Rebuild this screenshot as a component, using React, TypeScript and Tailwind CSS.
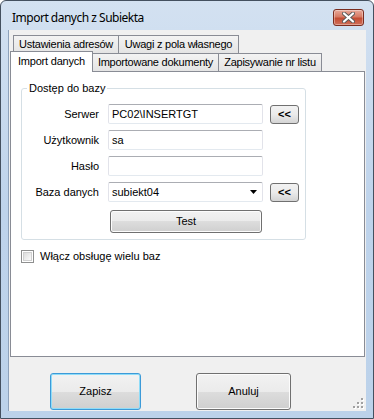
import React from "react";

const sans = "font-['Liberation_Sans',Arial,sans-serif]";

export default function App() {
  return (
    <div className="w-[374px] h-[419px] bg-white">
      {/* Window frame */}
      <div className="w-[374px] h-[419px] flex flex-col border border-[#44505f] rounded-t-[6px] bg-gradient-to-b from-[#d3e1f1] via-[#bed3eb] to-[#bcd2ea] overflow-hidden">
        {/* Title bar */}
        <div className="h-[29px] flex items-start">
          <span className="pl-[11px] pt-[9px] text-[12px] leading-[16px] tracking-[-0.5px] text-black font-['Noto_Sans',sans-serif]">
            Import danych z Subiekta
          </span>
          <div className="flex-1" />
          <CloseButton />
        </div>

        {/* Client area */}
        <div className={`relative mx-[7px] mb-[7px] flex-1 bg-[#f0f0f0] border-l border-[#8ea2bb] flex flex-col ${sans} text-[11px] text-black`}>
          <div className="pt-[5px] pl-[1px] pr-[1px] flex flex-col">
            {/* back row of tabs */}
            <div className="flex h-[18px] pl-[3px]">
              <Tab label="Ustawienia adresów" width="w-[106px]" />
              <Tab label="Uwagi z pola własnego" width="w-[121px]" />
            </div>
            {/* front row of tabs */}
            <div className="flex items-end h-[18px]">
              <div className="relative z-10 w-[83px] h-[21px] -mb-px bg-white border border-b-0 border-[#898c95] flex items-center justify-center pb-[1px] tracking-[-0.2px]">
                Import danych
              </div>
              <Tab label="Importowane dokumenty" width="w-[127px]" />
              <Tab label="Zapisywanie nr listu" width="w-[104px]" />
            </div>

            {/* Tab page */}
            <div className="h-[286px] bg-white border border-[#898c95] px-[10px] pt-[10px] flex flex-col">
              <fieldset className="w-[285px] border border-[#d5dfe5] rounded-[3px] pb-[6px]">
                <legend className="ml-[5px] px-[2px] leading-[13px]">Dostęp do bazy</legend>
                <div className="pt-[9px] flex flex-col gap-[6px]">
                  <Row label="Serwer">
                    <TextBox value="PC02\INSERTGT" />
                    <SmallButton />
                  </Row>
                  <Row label="Użytkownik">
                    <TextBox value="sa" />
                  </Row>
                  <Row label="Hasło">
                    <TextBox value="" />
                  </Row>
                  <Row label="Baza danych">
                    <div className="ml-[9px] w-[155px] h-[20px] border border-[#abadb3] border-b-[#e3e9ef] border-x-[#e2e3ea] rounded-[2px] bg-white flex items-center pl-[3px] pr-[5px]">
                      <span className="flex-1">subiekt04</span>
                      <svg width="7" height="4" viewBox="0 0 7 4">
                        <path d="M0 0h7L3.5 4z" fill="#000" />
                      </svg>
                    </div>
                    <SmallButton />
                  </Row>
                </div>
                <div className="mt-[8px] ml-[88px]">
                  <Button label="Test" width="w-[152px]" height="h-[23px]" />
                </div>
              </fieldset>

              <label className="mt-[8px] flex items-center">
                <span className="w-[13px] h-[13px] border border-[#8e8f8f] bg-white p-[1px] flex">
                  <span className="flex-1 border border-[#d0d0d0] bg-gradient-to-br from-[#dcdcdc] to-[#fbfbfb]" />
                </span>
                <span className="ml-[6px]">Włącz obsługę wielu baz</span>
              </label>
            </div>
          </div>

          {/* Dialog buttons */}
          <div className="mt-[16px] flex pl-[41px]">
            <Button label="Zapisz" width="w-[91px]" height="h-[37px]" primary />
            <div className="ml-[55px]">
              <Button label="Anuluj" width="w-[95px]" height="h-[37px]" />
            </div>
          </div>

          <SizeGrip />
        </div>
      </div>
    </div>
  );
}

function Tab({ label, width }: { label: string; width: string }) {
  return (
    <div
      className={`${width} h-[18px] border border-b-0 border-[#898c95] bg-gradient-to-b from-[#f3f3f3] to-[#e4e4e4] flex items-center justify-center -ml-px first:ml-0 whitespace-nowrap tracking-[-0.25px]`}
    >
      {label}
    </div>
  );
}

function Row({ label, children }: { label: string; children: React.ReactNode }) {
  return (
    <div className="flex items-center h-[20px]">
      <span className="w-[77px] text-right">{label}</span>
      {children}
    </div>
  );
}

function TextBox({ value }: { value: string }) {
  return (
    <div className="ml-[9px] w-[155px] h-[20px] border border-[#abadb3] border-b-[#e3e9ef] border-x-[#e2e3ea] rounded-[2px] bg-white flex items-center pl-[3px]">
      {value}
    </div>
  );
}

function SmallButton() {
  return (
    <div className="ml-[7px] w-[29px] h-[19px] border border-[#707070] rounded-[3px] bg-gradient-to-b from-[#f2f2f2] via-[#ebebeb] to-[#d4d4d4] flex items-center justify-center font-bold text-[11px] leading-none">
      &lt;&lt;
    </div>
  );
}

function Button({
  label,
  width,
  height,
  primary,
}: {
  label: string;
  width: string;
  height: string;
  primary?: boolean;
}) {
  return (
    <div
      className={`${width} ${height} rounded-[3px] border ${
        primary ? "border-[#3c9ad8] shadow-[inset_0_0_0_1px_#8fdcf8]" : "border-[#707070] shadow-[inset_0_0_0_1px_#fcfcfc]"
      } bg-[linear-gradient(to_bottom,#f2f2f2_0%,#ebebeb_50%,#dddddd_50%,#cfcfcf_100%)] flex items-center justify-center`}
    >
      {label}
    </div>
  );
}

function CloseButton() {
  return (
    <div className="mt-[8px] mr-[9px] w-[31px] h-[17px] rounded-[3px] border border-[#7a2d20] bg-[linear-gradient(to_bottom,#e9a99a_0%,#d77b65_45%,#c44c33_55%,#d0705a_100%)] flex items-center justify-center shadow-[inset_0_0_0_1px_rgba(255,255,255,0.35)]">
      <svg width="13" height="11" viewBox="0 0 13 11">
        <path d="M2 1.5L11 9.5M11 1.5L2 9.5" stroke="#5a5a5a" strokeWidth="4" strokeLinecap="round" />
        <path d="M2 1.5L11 9.5M11 1.5L2 9.5" stroke="#ffffff" strokeWidth="2.2" strokeLinecap="round" />
      </svg>
    </div>
  );
}

function SizeGrip() {
  const dots = [
    [8, 0],
    [4, 4],
    [8, 4],
    [0, 8],
    [4, 8],
    [8, 8],
  ];
  return (
    <svg className="absolute right-[2px] bottom-[2px]" width="11" height="11" viewBox="0 0 11 11">
      {dots.map(([x, y]) => (
        <g key={`${x}-${y}`}>
          <rect x={x + 1} y={y + 1} width="2" height="2" fill="#ffffff" />
          <rect x={x} y={y} width="2" height="2" fill="#a0a0a0" />
        </g>
      ))}
    </svg>
  );
}
